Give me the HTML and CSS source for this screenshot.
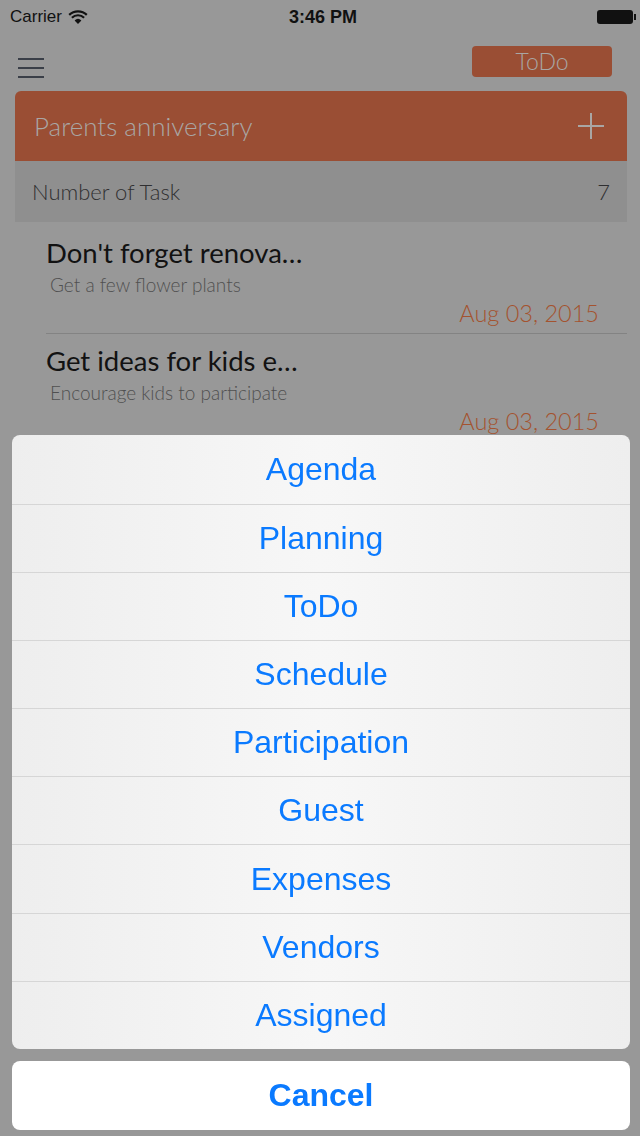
FILE: index.html
```html
<!DOCTYPE html>
<html lang="en">
<head>
  <meta charset="UTF-8">
  <meta name="viewport" content="width=device-width, initial-scale=1.0">
  <title>ToDo - Parents anniversary</title>
  <link rel="stylesheet" href="styles.css">
</head>
<body>

  <div class="status-bar">
    <div class="carrier">
      Carrier
      <svg class="wifi" width="20" height="15" viewBox="0 0 20 15">
        <path d="M10 14 L6.6 10.4 A5 5 0 0 1 13.4 10.4 Z" fill="#111"/>
        <path d="M3.9 7.7 A8.8 8.8 0 0 1 16.1 7.7" stroke="#111" stroke-width="2.2" fill="none"/>
        <path d="M1.2 4.9 A12.6 12.6 0 0 1 18.8 4.9" stroke="#111" stroke-width="2.2" fill="none"/>
      </svg>
    </div>
    <div class="time">3:46 PM</div>
    <div class="battery"><span class="battery-body"></span><span class="battery-tip"></span></div>
  </div>

  <div class="nav">
    <div class="menu-icon"><span></span><span></span><span></span></div>
    <div class="mode-btn">ToDo</div>
  </div>

  <div class="event-card">
    <div class="event-header">
      <span class="event-title">Parents anniversary</span>
      <svg class="add-icon" width="26" height="26" viewBox="0 0 26 26">
        <path d="M13 0 V26 M0 13 H26" stroke="#a9a6a4" stroke-width="2"/>
      </svg>
    </div>
    <div class="count-row">
      <span>Number of Task</span>
      <span>7</span>
    </div>
  </div>

  <ul class="task-list">
    <li class="task">
      <div class="task-title">Don't forget renova…</div>
      <div class="task-note">Get a few flower plants</div>
      <div class="task-date">Aug 03, 2015</div>
    </li>
    <li class="task">
      <div class="task-title">Get ideas for kids e…</div>
      <div class="task-note">Encourage kids to participate</div>
      <div class="task-date">Aug 03, 2015</div>
    </li>
  </ul>

  <div class="sheet-layer">
    <div class="sheet">
      <div class="sheet-item">Agenda</div>
      <div class="sheet-item">Planning</div>
      <div class="sheet-item">ToDo</div>
      <div class="sheet-item">Schedule</div>
      <div class="sheet-item">Participation</div>
      <div class="sheet-item">Guest</div>
      <div class="sheet-item">Expenses</div>
      <div class="sheet-item">Vendors</div>
      <div class="sheet-item">Assigned</div>
    </div>
    <div class="sheet cancel">Cancel</div>
  </div>

</body>
</html>
```

FILE: styles.css
```css
body {
  margin: 0;
  background: #989898;
  font-family: Lato, "Open Sans", sans-serif;
  width: 640px;
  height: 1136px;
  overflow: hidden;
}
.status-bar {
  height: 34px;
  padding: 0 4px 0 10px;
  display: flex;
  align-items: center;
  justify-content: space-between;
  font-family: "Liberation Sans", Arial, sans-serif;
  font-size: 17px;
  color: #111;
}
.carrier {
  display: flex;
  align-items: center;
  gap: 6px;
  width: 200px;
}
.time {
  font-weight: bold;
  font-size: 18px;
}
.battery {
  width: 200px;
  display: flex;
  justify-content: flex-end;
  align-items: center;
}
.battery-body {
  width: 36px;
  height: 14px;
  background: #111;
  border-radius: 3px;
}
.battery-tip {
  width: 2px;
  height: 6px;
  background: #111;
  margin-left: 1px;
}
.nav {
  height: 57px;
  display: flex;
  justify-content: space-between;
  align-items: flex-start;
  padding: 0 28px 0 18px;
}
.menu-icon {
  margin-top: 24px;
  display: flex;
  flex-direction: column;
  gap: 7px;
}
.menu-icon span {
  display: block;
  width: 26px;
  height: 2px;
  background: #3a3f48;
}
.mode-btn {
  margin-top: 12px;
  width: 140px;
  height: 31px;
  line-height: 31px;
  background: #9a4e34;
  border-radius: 4px;
  text-align: center;
  color: #a9a6a4;
  font-size: 23px;
  font-weight: 300;
}
.event-card {
  margin: 0 13px 0 15px;
}
.event-header {
  height: 70px;
  background: #9a4e34;
  border-radius: 6px 6px 0 0;
  display: flex;
  align-items: center;
  justify-content: space-between;
  padding: 0 23px 0 19px;
}
.event-title {
  color: #a9a6a4;
  font-size: 26px;
  font-weight: 300;
}
.count-row {
  height: 61px;
  background: #8f8f8f;
  display: flex;
  align-items: center;
  justify-content: space-between;
  padding: 0 17px;
  font-size: 22px;
  font-weight: 300;
  color: #2f2f31;
}
.task-list {
  list-style: none;
  margin: 0;
  padding: 4px 13px 0 46px;
}
.task {
  height: 108px;
  border-bottom: 1px solid #838383;
  padding-top: 10px;
  box-sizing: border-box;
}
.task-title {
  font-size: 27.5px;
  line-height: 34px;
  color: #121212;
}
.task-note {
  font-size: 19px;
  line-height: 30px;
  font-weight: 300;
  color: #505050;
  padding-left: 4px;
}
.task-date {
  text-align: right;
  padding-right: 28px;
  font-size: 23.5px;
  line-height: 26px;
  font-weight: 300;
  color: #a4532f;
}
.sheet-layer {
  position: fixed;
  left: 12px;
  right: 10px;
  bottom: 6px;
  display: flex;
  flex-direction: column;
  gap: 12px;
}
.sheet {
  background: linear-gradient(90deg, #eeeeee, #f7f7f7 50%, #eeeeee);
  border-radius: 8px;
  overflow: hidden;
  font-family: "Liberation Sans", Arial, sans-serif;
  color: #0a7aff;
  font-size: 32px;
}
.sheet-item {
  height: 68.2px;
  display: flex;
  align-items: center;
  justify-content: center;
  border-top: 1px solid #d6d6d6;
  box-sizing: border-box;
}
.sheet-item:first-child {
  border-top: none;
}
.cancel {
  background: #ffffff;
  height: 69px;
  display: flex;
  align-items: center;
  justify-content: center;
  font-weight: bold;
}
```
